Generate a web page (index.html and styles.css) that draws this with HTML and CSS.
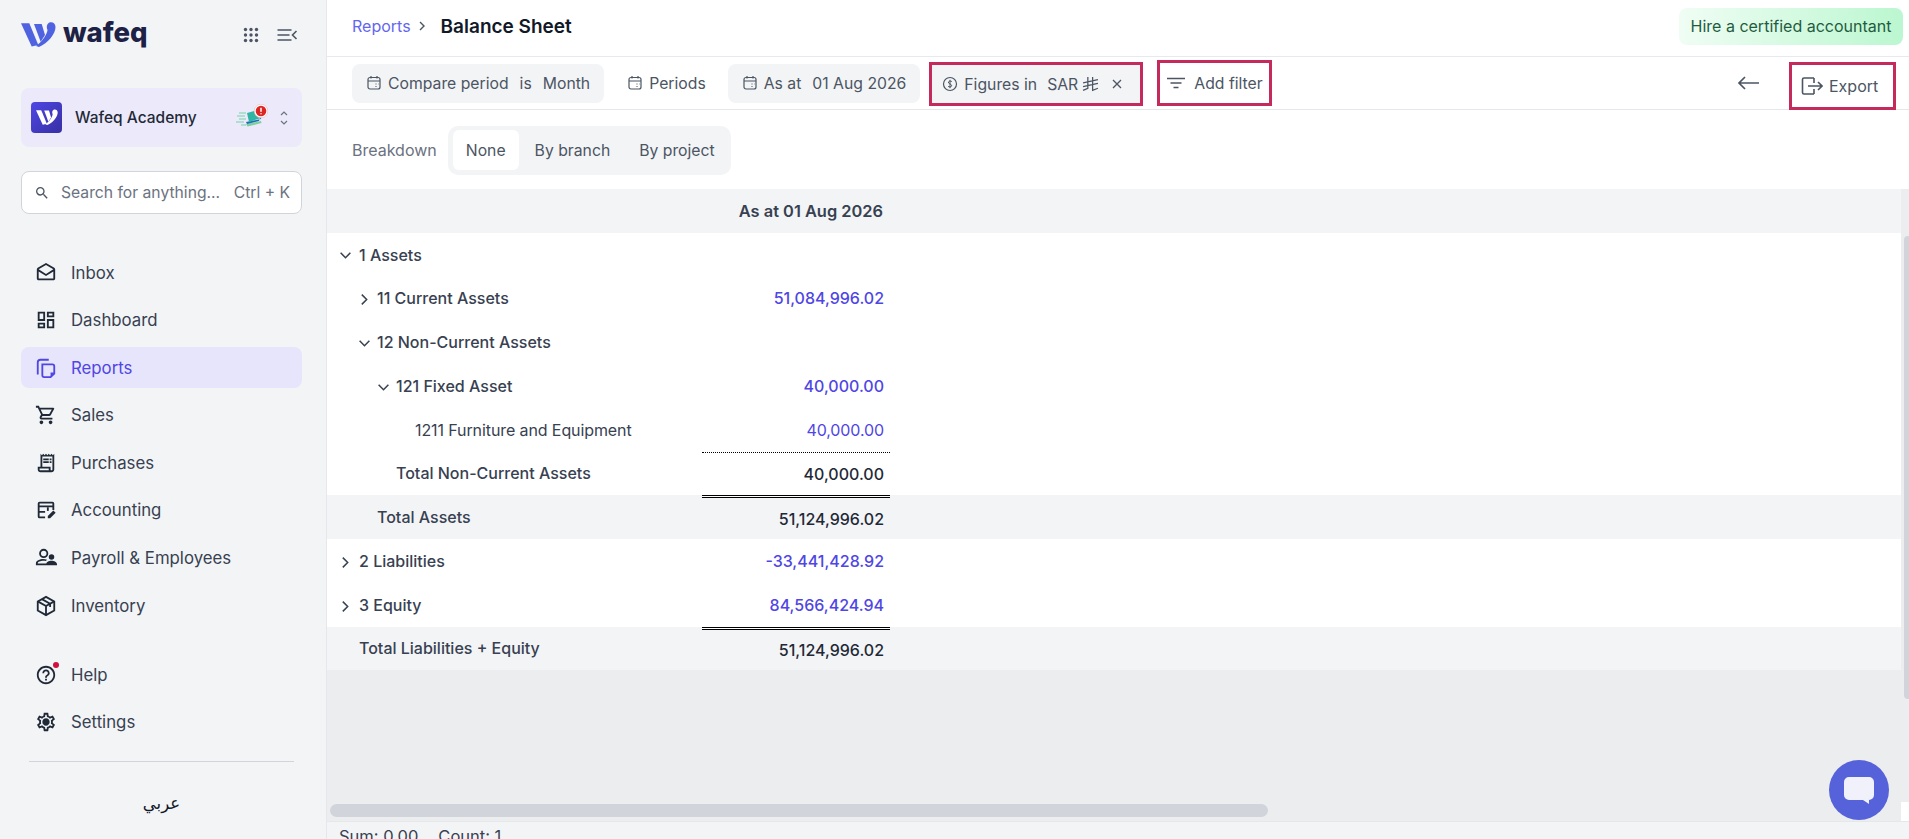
FILE: index.html
```html
<!DOCTYPE html>
<html lang="en">
<head>
<meta charset="utf-8">
<title>Balance Sheet - wafeq</title>
<link rel="stylesheet" href="styles.css">
</head>
<body>
<div class="app">
  <aside class="sidebar">
    <div class="brand">
      <svg class="logo-mark" viewBox="0 0 35 26" width="35" height="26"><path fill="#4f63e0" d="M0 1.3h8.3l9 21.7-6.6 1.4z"/><path fill="#4f63e0" d="M13 2h7.7L24 13l-4.300 6.700z"/><path fill="#4f63e0" d="M28 .8C31-.5 34.500 1 34.500 5 34.500 12 27 21 18 25l-3-1c7-5 11-12 11.500-16C25 5 26 2 28 .8z"/></svg>
      <span class="wordmark">wafeq</span>
      <div class="brand-tools">
        <svg viewBox="0 0 16 16" width="16" height="16" fill="#4b5563"><circle cx="2.500" cy="2.500" r="1.700"/><circle cx="8" cy="2.500" r="1.700"/><circle cx="13.500" cy="2.500" r="1.700"/><circle cx="2.500" cy="8" r="1.700"/><circle cx="8" cy="8" r="1.700"/><circle cx="13.500" cy="8" r="1.700"/><circle cx="2.500" cy="13.500" r="1.700"/><circle cx="8" cy="13.500" r="1.700"/><circle cx="13.500" cy="13.500" r="1.700"/></svg>
        <svg viewBox="0 0 20 14" width="21" height="14" fill="none" stroke="#4b5563" stroke-width="1.600"><path d="M0 2h14M0 7h12M0 12h14"/><path d="M19 3l-4 4 4 4"/></svg>
      </div>
    </div>
    <div class="company">
      <span class="company-badge"><svg viewBox="0 0 35 26" width="22" height="17"><path fill="#fff" d="M0 1.300h8.300l9 21.700-6.600 1.400z"/><path fill="#fff" d="M13 2h7.700L24 13l-4.300 6.700z"/><path fill="#fff" d="M28 .8C31-.5 34.500 1 34.500 5 34.500 12 27 21 18 25l-3-1c7-5 11-12 11.500-16C25 5 26 2 28 .8z"/></svg></span>
      <span class="company-name">Wafeq Academy</span>
      <svg class="company-plan" viewBox="0 0 32 24" width="32" height="24"><path d="M1 12h8M3 15h7M0 18h8M3 9h7M5 21h5" stroke="#9adcc2" stroke-width="1.400"/><path fill="#7fcf9f" d="M10 20l15-3 .5 2-14 3.500z"/><path fill="#1e6fb8" d="M10 18l15-3 1-7-3 9-12 3z"/><path fill="#2fb5a3" d="M11 9l11-3 3 8-12 4z"/><circle cx="25" cy="7" r="6.800" fill="#fff" stroke="#f3b4b4" stroke-width=".6"/><circle cx="25" cy="7" r="5.300" fill="#dc2626"/><path d="M25 3.800v4M25 9.200v1" stroke="#fff" stroke-width="1.500"/></svg>
      <svg class="company-switch" viewBox="0 0 10 16" width="10" height="16" fill="none" stroke="#6b7280" stroke-width="1.200"><path d="M2 5l3-3 3 3M2 11l3 3 3-3"/></svg>
    </div>
    <div class="search">
      <svg viewBox="0 0 24 24" width="16" height="16" fill="#4b5563"><path d="M15.500 14h-.79l-.28-.27A6.470 6.470 0 0 0 16 9.500 6.500 6.500 0 1 0 9.500 16c1.610 0 3.090-.59 4.230-1.570l.27.28v.79l5 4.990L20.490 19l-4.990-5zm-6 0C7.010 14 5 11.990 5 9.500S7.010 5 9.500 5 14 7.010 14 9.500 11.990 14 9.500 14z"/></svg>
      <span class="search-text">Search for anything...</span>
      <span class="search-key">Ctrl + K</span>
    </div>
    <nav class="nav">
      <a class="nav-item"><svg class="ico" viewBox="0 0 24 24"><path d="M21.990 8c0-.72-.37-1.350-.94-1.700L12 1 2.950 6.300C2.380 6.650 2 7.280 2 8v10c0 1.100.9 2 2 2h16c1.100 0 2-.9 2-2l-.01-10zM19.990 8v.01L12 13 4 8l8-4.680L19.990 8zM4 18v-7.660l8 5.020 7.990-4.990L20 18H4z"/></svg>Inbox</a>
      <a class="nav-item"><svg class="ico" viewBox="0 0 24 24"><path d="M19 5v2h-4V5h4M9 5v6H5V5h4m10 8v6h-4v-6h4M9 17v2H5v-2h4M21 3h-8v6h8V3zM11 3H3v10h8V3zm10 8h-8v10h8V11zm-10 4H3v6h8v-6z"/></svg>Dashboard</a>
      <a class="nav-item is-active"><svg class="ico ico-copy" viewBox="0 0 24 24"><path d="M3 19V6a3 3 0 0 1 3-3h9"/><path d="M8 8h11a2 2 0 0 1 2 2v8l-4 4H10a2 2 0 0 1-2-2z"/><path class="ico-fold" d="M21 17h-4v5z"/></svg>Reports</a>
      <a class="nav-item"><svg class="ico" viewBox="0 0 24 24"><path d="M15.550 13c.75 0 1.410-.41 1.750-1.030l3.580-6.490c.37-.66-.11-1.480-.87-1.480H5.210l-.94-2H1v2h2l3.600 7.590-1.350 2.440C4.520 15.370 5.480 17 7 17h12v-2H7l1.100-2h7.450zM6.160 6h12.150l-2.760 5H8.530L6.160 6zM7 18c-1.100 0-1.990.9-1.990 2S5.900 22 7 22s2-.9 2-2-.9-2-2-2zm10 0c-1.100 0-1.990.9-1.990 2s.89 2 1.990 2 2-.9 2-2-.9-2-2-2z"/></svg>Sales</a>
      <a class="nav-item"><svg class="ico" viewBox="0 0 24 24"><path d="M19.500 3.500 18 2l-1.500 1.500L15 2l-1.500 1.500L12 2l-1.500 1.500L9 2 7.500 3.500 6 2v14H3v3c0 1.660 1.340 3 3 3h12c1.660 0 3-1.340 3-3V2l-1.500 1.500zM15 20H6c-.55 0-1-.45-1-1v-1h10v2zm4-1c0 .55-.45 1-1 1s-1-.45-1-1v-3H8V5h11v14z"/><path d="M9 7h6v2H9zM16 7h2v2h-2zM9 10h6v2H9zM16 10h2v2h-2z"/></svg>Purchases</a>
      <a class="nav-item"><svg class="ico" viewBox="0 0 24 24"><path d="M5 3h14a2 2 0 0 1 2 2v7h-2V9H5v4h6v2H5v4h6v2H5a2 2 0 0 1-2-2V5a2 2 0 0 1 2-2zm0 2v2h14V5H5z"/><path d="M13 9h2v4h-2z"/><path d="M14 21v-2.500l6-6 2.500 2.500-6 6z"/></svg>Accounting</a>
      <a class="nav-item"><svg class="ico" viewBox="0 0 24 24"><path d="M9.500 4a3 3 0 1 1 0 6 3 3 0 0 1 0-6zm0-2a5 5 0 1 0 0 10 5 5 0 0 0 0-10zM9 13c-3.700 0-8 1.800-8 4.500V20h11v-2H3v-.5C3 16.300 6 15 9 15c1 0 2 .15 2.900.4l1.200-1.600C11.900 13.300 10.400 13 9 13z"/><circle cx="18" cy="11" r="3"/><path d="M12 20v-1c0-2.500 3-4 6-4s6 1.500 6 4v1z"/></svg>Payroll &amp; Employees</a>
      <a class="nav-item"><svg class="ico ico-line" viewBox="0 0 24 24"><path d="M12 2l9 5v10l-9 5-9-5V7z"/><path d="M3 7l9 5 9-5M12 12v10M7.500 4.500l9 5v3.500"/></svg>Inventory</a>
      <div class="nav-gap"></div>
      <a class="nav-item"><span class="help-wrap"><svg class="ico" viewBox="0 0 24 24"><path d="M11 18h2v-2h-2v2zm1-16C6.480 2 2 6.480 2 12s4.480 10 10 10 10-4.480 10-10S17.520 2 12 2zm0 18c-4.410 0-8-3.590-8-8s3.590-8 8-8 8 3.590 8 8-3.590 8-8 8zm0-14c-2.210 0-4 1.790-4 4h2c0-1.100.9-2 2-2s2 .9 2 2c0 2-3 1.750-3 5h2c0-2.250 3-2.500 3-5 0-2.210-1.790-4-4-4z"/></svg><i class="help-dot"></i></span>Help</a>
      <a class="nav-item"><svg class="ico" viewBox="0 0 24 24"><path d="M19.430 12.980c.04-.32.07-.64.07-.98 0-.34-.03-.66-.07-.98l2.110-1.650c.19-.15.24-.42.12-.64l-2-3.460c-.09-.16-.26-.25-.44-.25-.06 0-.12.01-.17.03l-2.490 1c-.52-.4-1.080-.73-1.690-.98l-.38-2.650C14.460 2.180 14.250 2 14 2h-4c-.25 0-.46.18-.49.42l-.38 2.650c-.61.25-1.170.59-1.690.98l-2.490-1c-.06-.02-.12-.03-.18-.03-.17 0-.34.09-.43.25l-2 3.460c-.13.22-.07.49.12.64l2.110 1.650c-.04.32-.07.65-.07.98 0 .33.03.66.07.98l-2.110 1.650c-.19.15-.24.42-.12.64l2 3.460c.09.16.26.25.44.25.06 0 .12-.01.17-.03l2.490-1c.52.4 1.080.73 1.690.98l.38 2.650c.03.24.24.42.49.42h4c.25 0 .46-.18.49-.42l.38-2.650c.61-.25 1.170-.59 1.690-.98l2.490 1c.06.02.12.03.18.03.17 0 .34-.09.43-.25l2-3.460c.12-.22.07-.49-.12-.64l-2.110-1.650zm-1.980-1.710c.04.31.05.52.05.73 0 .21-.02.43-.05.73l-.14 1.130.89.7 1.080.84-.7 1.210-1.270-.51-1.040-.42-.9.68c-.43.32-.84.56-1.250.73l-1.060.43-.16 1.130-.2 1.350h-1.400l-.19-1.350-.16-1.130-1.060-.43c-.43-.18-.83-.41-1.230-.71l-.91-.7-1.060.43-1.270.51-.7-1.210 1.080-.84.89-.7-.14-1.130c-.03-.31-.05-.54-.05-.74s.02-.43.05-.73l.14-1.130-.89-.7-1.080-.84.7-1.210 1.270.51 1.040.42.9-.68c.43-.32.84-.56 1.250-.73l1.060-.43.16-1.130.2-1.350h1.390l.19 1.350.16 1.130 1.060.43c.43.18.83.41 1.230.71l.91.7 1.060-.43 1.270-.51.7 1.210-1.070.85-.89.7.14 1.130zM12 8c-2.210 0-4 1.790-4 4s1.790 4 4 4 4-1.790 4-4-1.790-4-4-4z"/></svg>Settings</a>
    </nav>
    <div class="lang"><span>عربي</span></div>
  </aside>

  <main class="main">
    <header class="topbar">
      <a class="crumb">Reports</a>
      <svg class="crumb-sep" viewBox="0 0 8 12" width="8" height="12" fill="none" stroke="#4b5563" stroke-width="1.400"><path d="M2 2l4 4-4 4"/></svg>
      <h1 class="title">Balance Sheet</h1>
      <a class="hire">Hire a certified accountant</a>
    </header>

    <div class="filters">
      <span class="pill"><svg class="cal" viewBox="0 0 16 16"><rect x="2" y="2.500" width="12" height="11.500" rx="2"/><path d="M2 6h12M5 1v2.500M11 1v2.500M9.500 9h1M9.500 11.500h1M12 9h.5"/></svg><span>Compare period</span><span class="pill-gap">is</span><span class="pill-gap">Month</span></span>
      <span class="pill pill-plain"><svg class="cal" viewBox="0 0 16 16"><rect x="2" y="2.500" width="12" height="11.500" rx="2"/><path d="M2 6h12M5 1v2.500M11 1v2.500M9.500 9h1M9.500 11.500h1M12 9h.5"/></svg><span>Periods</span></span>
      <span class="pill"><svg class="cal" viewBox="0 0 16 16"><rect x="2" y="2.500" width="12" height="11.500" rx="2"/><path d="M2 6h12M5 1v2.500M11 1v2.500M9.500 9h1M9.500 11.500h1M12 9h.5"/></svg><span>As at</span><span class="pill-gap">01 Aug 2026</span></span>
      <span class="pill pill-marked"><svg class="cal" viewBox="0 0 16 16"><circle cx="8" cy="8" r="6.500"/><path class="cal-thin" d="M10 5.800C9.500 5 7 4.700 6.400 6c-.6 1.800 3.400 1.800 3.300 3.800-.2 1.500-3 1.400-3.700.4M8 3.800v8.400"/></svg><span>Figures in</span><span class="pill-gap pill-gap-tight">SAR</span><svg class="sar" viewBox="0 0 16 16" fill="none" stroke="#4b5563" stroke-width="1.200"><path d="M5.500 1v10.500L1 13.500M10 1v12.500l5-2M1 6.500l14-3M1 10l14-3"/></svg><svg class="close" viewBox="0 0 10 10" fill="none" stroke="#4b5563" stroke-width="1.300"><path d="M1 1l8 8M9 1l-8 8"/></svg></span>
      <span class="add-filter"><svg viewBox="0 0 18 12" width="18" height="12" fill="none" stroke="#4b5563" stroke-width="1.600"><path d="M0 1.500h18M3.500 6h11M6.500 10.500h5"/></svg><span>Add filter</span></span>
      <span class="filters-end">
        <svg class="back" viewBox="0 0 22 14" width="22" height="14" fill="none" stroke="#4b5563" stroke-width="1.700"><path d="M22 7H2M8 1L2 7l6 6"/></svg>
        <span class="export"><svg viewBox="0 0 22 20" width="22" height="20" fill="none" stroke="#4b5563" stroke-width="1.600"><path d="M13 2H3a1.500 1.500 0 0 0-1.500 1.500v13A1.500 1.500 0 0 0 3 18h10"/><path d="M7 10h14M17 6l4 4-4 4"/><path d="M13 2v5M13 13v5"/></svg><span>Export</span></span>
      </span>
    </div>

    <div class="breakdown">
      <span class="breakdown-label">Breakdown</span>
      <div class="segment">
        <span class="seg seg-on">None</span>
        <span class="seg">By branch</span>
        <span class="seg">By project</span>
      </div>
    </div>

    <div class="report">
      <table class="sheet">
        <colgroup><col class="col-label"><col class="col-value"><col></colgroup>
        <thead>
          <tr><th></th><th class="val">As at 01 Aug 2026</th><th></th></tr>
        </thead>
        <tbody>
          <tr class="row-short"><td class="l0"><svg class="chev" viewBox="0 0 12 12"><path d="M1.500 3.500L6 8l4.500-4.500"/></svg>1 Assets</td><td></td><td></td></tr>
          <tr><td class="l1"><svg class="chev" viewBox="0 0 12 12"><path d="M3.500 1.500L8 6l-4.500 4.500"/></svg>11 Current Assets</td><td class="val link">51,084,996.02</td><td></td></tr>
          <tr><td class="l1"><svg class="chev" viewBox="0 0 12 12"><path d="M1.500 3.500L6 8l4.500-4.500"/></svg>12 Non-Current Assets</td><td></td><td></td></tr>
          <tr><td class="l2"><svg class="chev" viewBox="0 0 12 12"><path d="M1.500 3.500L6 8l4.500-4.500"/></svg>121 Fixed Asset</td><td class="val link">40,000.00</td><td></td></tr>
          <tr><td class="l3 leaf">1211 Furniture and Equipment</td><td class="val link leaf">40,000.00</td><td></td></tr>
          <tr class="row-short"><td class="l2 plain">Total Non-Current Assets</td><td class="val total">40,000.00</td><td></td></tr>
          <tr class="band"><td class="l1 plain">Total Assets</td><td class="val strong">51,124,996.02</td><td></td></tr>
          <tr><td class="l0"><svg class="chev" viewBox="0 0 12 12"><path d="M3.500 1.500L8 6l-4.500 4.500"/></svg>2 Liabilities</td><td class="val link">-33,441,428.92</td><td></td></tr>
          <tr><td class="l0"><svg class="chev" viewBox="0 0 12 12"><path d="M3.500 1.500L8 6l-4.500 4.500"/></svg>3 Equity</td><td class="val link">84,566,424.94</td><td></td></tr>
          <tr class="band row-short"><td class="l0 plain">Total Liabilities + Equity</td><td class="val strong">51,124,996.02</td><td></td></tr>
        </tbody>
      </table>
      <div class="hbar"></div>
      <div class="vbar"></div>
      <div class="corner"></div>
      <button class="chat" aria-label="Chat"><svg viewBox="0 0 30 27" width="30" height="27"><path fill="#f0f1fa" d="M5 0h20a5 5 0 0 1 5 5v13a5 5 0 0 1-5 5v4l-6-4H5a5 5 0 0 1-5-5V5a5 5 0 0 1 5-5z"/></svg></button>
    </div>

    <footer class="status"><span>Sum: 0.00</span><span>Count: 1</span></footer>
  </main>
</div>
</body>
</html>
```
FILE: styles.css
```css
* { box-sizing: border-box; }
html, body { margin: 0; height: 100%; overflow: hidden; }
body { font-family: "Inter", "DejaVu Sans", sans-serif; color: #374151; background: #fff; font-size: 16px; }
a { color: inherit; text-decoration: none; }

.app { display: grid; grid-template-columns: 327px 1fr; height: 839px; }

/* Sidebar */
.sidebar { background: #f3f4f6; border-right: 1px solid #e5e7eb; padding: 0 24px 0 21px; display: flex; flex-direction: column; }
.brand { height: 70px; display: flex; align-items: center; }
.logo-mark { flex: none; }
.wordmark { font-size: 27.5px; font-weight: 800; color: #1c2145; margin-left: 7px; line-height: 1; padding-bottom: 4px; }
.brand-tools { margin-left: auto; display: flex; align-items: center; gap: 18px; margin-right: 4px; }

.company { margin-top: 18px; height: 59px; border-radius: 8px; background: #eceafa; display: flex; align-items: center; padding: 0 13px 0 10px; }
.company-badge { width: 31px; height: 31px; border-radius: 4px; background: linear-gradient(135deg, #4f46e5, #3730a3); display: flex; align-items: center; justify-content: center; }
.company-name { margin-left: 13px; font-size: 15.5px; font-weight: 500; color: #1f2937; }
.company-plan { margin-left: auto; margin-top: -3px; }
.company-switch { margin-left: 11px; }

.search { margin-top: 24px; height: 43px; background: #fff; border: 1px solid #d1d5db; border-radius: 8px; display: flex; align-items: center; padding: 0 11px 0 12px; color: #6b7280; font-size: 15.7px; }
.search-text { margin-left: 11px; }
.search-key { margin-left: auto; white-space: nowrap; }

.nav { margin-top: 38px; display: flex; flex-direction: column; gap: 6.6px; }
.nav-item { height: 41px; display: flex; align-items: center; gap: 15px; padding-left: 15px; border-radius: 8px; font-size: 16.8px; color: #374151; }
.nav-item.is-active { background: #e6e5fb; color: #4f46e5; }
.ico { width: 22px; height: 22px; fill: #1f2937; flex: none; margin-left: -1px; margin-right: -1px; }
.ico-copy { fill: none; stroke: #4f46e5; stroke-width: 2; }
.ico-fold { fill: #4f46e5; stroke: none; }
.ico-line { fill: none; stroke: #1f2937; stroke-width: 2; }
.nav-gap { height: 15px; }
.help-wrap { position: relative; display: flex; }
.help-dot { position: absolute; top: -2px; right: -3px; width: 6px; height: 6px; background: #d1103f; border-radius: 50%; }

.lang { margin: 18px 8px 0; border-top: 1px solid #d1d5db; text-align: center; padding-top: 31px; font-size: 16.5px; color: #111827; }

/* Main */
.main { display: flex; flex-direction: column; min-width: 0; height: 839px; }
.topbar { flex: none; height: 57px; border-bottom: 1px solid #e8e8f0; display: flex; align-items: center; padding: 0 6px 4px 25px; }
.crumb { color: #6366f1; font-size: 16px; }
.crumb-sep { margin: 0 15px 0 7px; }
.title { margin: 0; font-size: 19px; font-weight: 600; color: #111827; }
.hire { margin-left: auto; width: 224px; height: 37px; border-radius: 8px; background: linear-gradient(90deg, #f0fdf4, #bbf7d0); color: #1f5c3f; display: flex; align-items: center; justify-content: center; font-size: 16px; }

.filters { flex: none; height: 53px; border-bottom: 1px solid #e5e7eb; display: flex; align-items: center; padding: 0 13px 0 25px; color: #4b5563; font-size: 15.75px; }
.pill { height: 39px; padding: 0 14px; border-radius: 8px; background: #f3f4f6; display: flex; align-items: center; white-space: nowrap; margin-right: 9px; }
.pill-plain { background: none; margin-right: 8px; }
.pill-gap { margin-left: 11px; }
.pill-gap-tight { margin-left: 10px; }
.cal { width: 16px; height: 16px; fill: none; stroke: #4b5563; stroke-width: 1.200; margin-right: 6px; flex: none; }
.cal-thin { stroke-width: 1; }
.pill-marked { height: 44px; width: 214px; margin-left: 0; border: 3px solid #c42b5c; border-radius: 0; padding: 0 0 0 10px; margin-right: 14px; margin-top: 2px; }
.sar { width: 17px; height: 17px; margin-left: 4px; }
.close { width: 10px; height: 10px; margin-left: 13px; }
.add-filter { height: 46px; width: 115px; border: 3px solid #c42b5c; display: flex; align-items: center; gap: 9px; padding-left: 7px; white-space: nowrap; }
.filters-end { margin-left: auto; display: flex; align-items: center; }
.back { margin-right: 30px; }
.export { height: 48px; width: 107px; border: 3px solid #c42b5c; display: flex; align-items: center; gap: 6px; padding-left: 9px; margin-top: 5px; font-size: 16px; }

.breakdown { flex: none; height: 79px; display: flex; align-items: center; padding: 1px 0 0 25px; color: #6b7280; font-size: 16px; }
.breakdown-label { margin-right: 11px; }
.segment { height: 49px; background: #f3f4f6; border-radius: 10px; display: flex; align-items: center; padding: 0 3px 0 5px; color: #4b5563; font-size: 15.75px; }
.seg { height: 40px; display: flex; align-items: center; padding: 0 13px; border-radius: 6px; margin-right: 3px; }
.seg:last-child { margin-right: 0; }
.seg-on { background: #fff; }

/* Report */
.report { flex: 1; min-height: 0; position: relative; background: #ecedef; overflow: hidden; }
.sheet { width: calc(100% - 8px); border-collapse: separate; border-spacing: 0; table-layout: fixed; font-size: 16px; }
.col-label { width: 375px; }
.col-value { width: 188px; }
.sheet tr { height: 44px; }
.sheet tr.row-short { height: 43px; }
.sheet th { background: #f3f4f6; font-weight: 600; font-size: 16.4px; color: #374151; padding: 0; }
.sheet td { background: #fff; padding: 0; font-weight: 500; color: #374151; white-space: nowrap; }
.sheet .band td { background: #f3f4f6; }
.sheet .val { text-align: right; padding-right: 6px; }
.sheet th.val { padding-right: 7px; }
.sheet .link { color: #4f46e5; }
.sheet .leaf { font-weight: 400; letter-spacing: -.1px; }
.sheet .band td.strong { color: #1f2937; padding-top: 3px; background: linear-gradient(#000 0 1px, #fff 1px 2px, #000 2px 3px, #f3f4f6 3px); }
.sheet .total { color: #1f2937; border-top: 1px dotted #000; }
.chev { width: 13px; height: 13px; fill: none; stroke: #374151; stroke-width: 1.400; margin-right: 6px; vertical-align: -1.500px; }
.l0 .chev { margin-right: 7px; }
.sheet .l0 { padding-left: 12px; }
.sheet .l1 { padding-left: 31px; }
.sheet .l2 { padding-left: 50px; }
.sheet .l3 { padding-left: 88px; }
.sheet .l1.plain { padding-left: 50px; }
.sheet .l2.plain { padding-left: 69px; padding-bottom: 1px; }
.sheet .l0.plain { padding-left: 32px; padding-bottom: 2px; }

.hbar { position: absolute; left: 3px; bottom: 4px; width: 938px; height: 13px; border-radius: 7px; background: #d1d5db; }
.vbar { position: absolute; right: 0; top: 47px; width: 5px; height: 463px; border-radius: 4px 0 0 4px; background: #d1d5db; }
.corner { position: absolute; right: 0; bottom: 0; width: 8px; height: 19px; background: #fff; }
.chat { position: absolute; right: 20px; bottom: 1px; width: 60px; height: 60px; border: 0; border-radius: 50%; background: #5562d9; display: flex; align-items: center; justify-content: center; padding: 0; }

.status { flex: none; height: 18px; overflow: hidden; background: #f3f4f6; border-top: 1px solid #e5e7eb; padding: 5px 0 0 12px; display: flex; gap: 20px; color: #374151; font-size: 16.5px; line-height: 18px; }
```
